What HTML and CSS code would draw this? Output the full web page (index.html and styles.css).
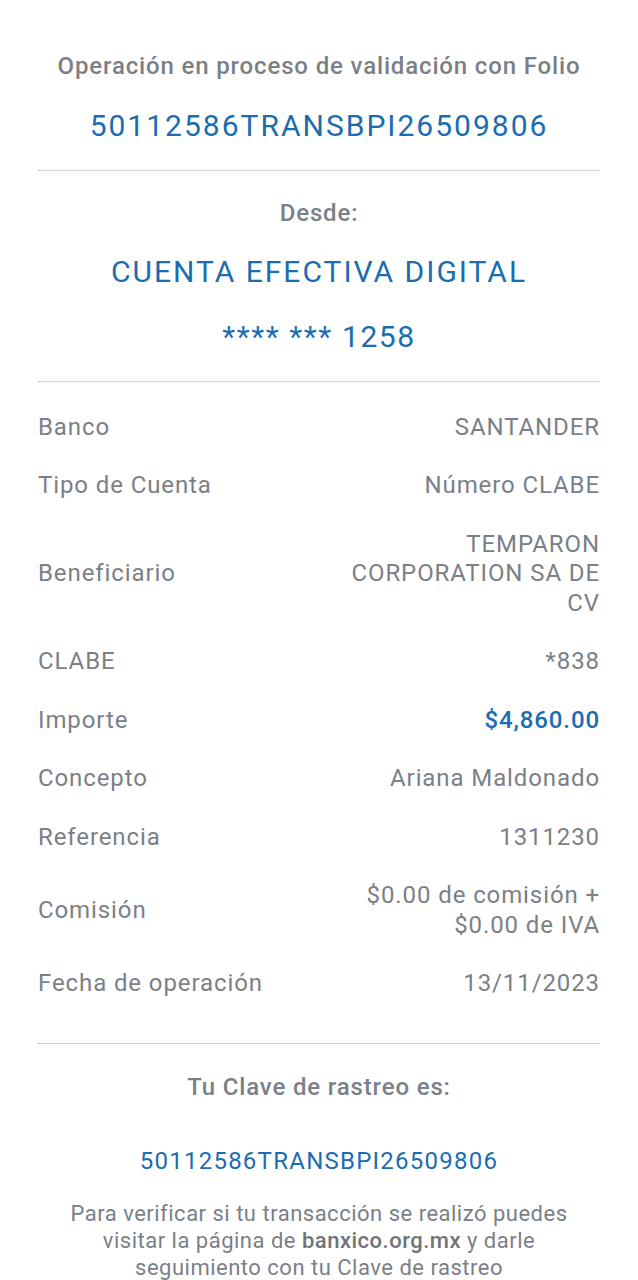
FILE: index.html
```html
<!DOCTYPE html>
<html lang="es">
<head>
  <meta charset="UTF-8" />
  <meta name="viewport" content="width=device-width, initial-scale=1.0"/>
  <title>Comprobante de transferencia</title>
  <link rel="stylesheet" href="styles.css">
</head>
<body>
  <div class="receipt">
    <div class="header">
      <p class="caption">Operación en proceso de validación con Folio</p>
      <p class="folio">50112586TRANSBPI26509806</p>
    </div>

    <div class="divider"></div>

    <div class="origin">
      <p class="caption">Desde:</p>
      <p class="account-name">CUENTA EFECTIVA DIGITAL</p>
      <p class="account-number">**** *** 1258</p>
    </div>

    <div class="divider"></div>

    <div class="details">
      <div class="row">
        <span class="label">Banco</span>
        <span class="value">SANTANDER</span>
      </div>
      <div class="row">
        <span class="label">Tipo de Cuenta</span>
        <span class="value">Número CLABE</span>
      </div>
      <div class="row">
        <span class="label">Beneficiario</span>
        <span class="value narrow">TEMPARON CORPORATION SA DE CV</span>
      </div>
      <div class="row">
        <span class="label">CLABE</span>
        <span class="value">*838</span>
      </div>
      <div class="row">
        <span class="label">Importe</span>
        <span class="value amount">$4,860.00</span>
      </div>
      <div class="row">
        <span class="label">Concepto</span>
        <span class="value">Ariana Maldonado</span>
      </div>
      <div class="row">
        <span class="label">Referencia</span>
        <span class="value">1311230</span>
      </div>
      <div class="row">
        <span class="label">Comisión</span>
        <span class="value">$0.00 de comisión +<br>$0.00 de IVA</span>
      </div>
      <div class="row">
        <span class="label">Fecha de operación</span>
        <span class="value">13/11/2023</span>
      </div>
    </div>

    <div class="divider"></div>

    <div class="tracking">
      <p class="caption">Tu Clave de rastreo es:</p>
      <p class="tracking-code">50112586TRANSBPI26509806</p>
      <p class="note">Para verificar si tu transacción se realizó puedes visitar la página de <b>banxico.org.mx</b> y darle seguimiento con tu Clave de rastreo</p>
    </div>
  </div>
</body>
</html>
```

FILE: styles.css
```css
body {
  font-family: Roboto, "Noto Sans", Arial, sans-serif;
  margin: 0;
  background: #fff;
  color: #7b7f87;
}

p {
  margin: 0;
}

.receipt {
  padding: 0 38px;
}

.header {
  text-align: center;
  padding-top: 50px;
  padding-bottom: 24px;
}

.caption {
  font-size: 24px;
  font-weight: 500;
  line-height: 32px;
  letter-spacing: 0.85px;
}

.folio {
  color: #1a6db1;
  font-size: 30px;
  line-height: 40px;
  margin-top: 24px;
  letter-spacing: 2px;
}

.divider {
  height: 1px;
  background: repeating-linear-gradient(to right, #c4c4c4 0 3px, transparent 3px 4px);
}

.origin {
  text-align: center;
  padding-top: 26px;
  padding-bottom: 24px;
}

.account-name {
  color: #1a6db1;
  font-size: 30px;
  line-height: 40px;
  margin-top: 23px;
  letter-spacing: 2px;
}

.account-number {
  color: #1a6db1;
  font-size: 30px;
  line-height: 40px;
  margin-top: 25px;
  letter-spacing: 1.6px;
}

.details {
  padding: 16px 0 30px;
}

.row {
  display: flex;
  justify-content: space-between;
  align-items: center;
  gap: 20px;
  padding: 14.5px 0;
  font-size: 24px;
  line-height: 29.5px;
  letter-spacing: 0.9px;
}

.value {
  text-align: right;
}

.value.narrow {
  max-width: 260px;
}

.value.amount {
  color: #1a6db1;
  font-weight: 500;
}

.tracking {
  text-align: center;
  padding-top: 27px;
}

.tracking-code {
  color: #1a6db1;
  font-size: 24px;
  line-height: 32px;
  margin-top: 42px;
  letter-spacing: 1.25px;
}

.note {
  font-size: 22px;
  line-height: 27px;
  margin-top: 23px;
  padding: 0 30px;
  letter-spacing: 0.5px;
}

.note b {
  font-weight: 500;
  color: #6f737a;
}
```
